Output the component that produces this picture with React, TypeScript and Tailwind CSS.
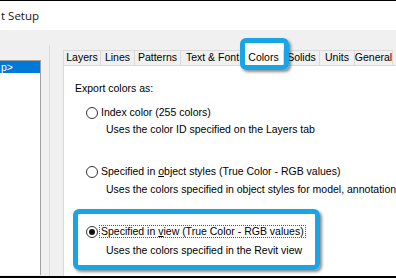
import React from 'react';

const tabs = [
  { label: 'Layers', w: 'w-[37px]' },
  { label: 'Lines', w: 'w-[34px]' },
  { label: 'Patterns', w: 'w-[46px]' },
  { label: 'Text & Font', w: 'w-[64px]' },
  { label: 'Colors', w: 'w-[39px]', active: true },
  { label: 'Solids', w: 'w-[36px]' },
  { label: 'Units', w: 'w-[35px]' },
  { label: 'General', w: 'w-[38px]' },
];

function Radio({ checked }: { checked?: boolean }) {
  return (
    <span className="w-[12px] h-[12px] rounded-full border border-[#333] bg-white flex items-center justify-center shrink-0">
      {checked && <span className="w-[6px] h-[6px] rounded-full bg-[#111]" />}
    </span>
  );
}

export default function App() {
  return (
    <div
      className="relative w-[396px] h-[278px] overflow-hidden bg-[#f0f0f0] flex flex-col text-[#000]"
      style={{ fontFamily: '"Liberation Sans", Arial, sans-serif' }}
    >
      <div className="h-[1px] bg-black shrink-0" />
      {/* title bar */}
      <div className="h-[29px] bg-white flex items-center pl-[1px] shrink-0">
        <span className="text-[11.5px] text-[#1a1020]" style={{ fontFamily: '"Open Sans", "Noto Sans", sans-serif' }}>
          t Setup
        </span>
      </div>

      {/* body */}
      <div className="flex-1 flex min-h-0">
        <div className="w-[50px] pt-[15px] flex flex-col shrink-0">
          <div className="flex-1 border-r border-[#dcdcdc] pt-[15px] pb-[1px] flex flex-col">
            <div className="w-[41px] flex-1 bg-white border-t border-r border-[#a0a0a0]">
              <div className="h-[12px] bg-[#0078d7] text-white text-[10.5px] leading-[12px] pl-[1px]">p&gt;</div>
            </div>
          </div>
        </div>

        <div className="flex-1 ml-[13px] pt-[20px] flex flex-col min-w-0 text-[10.5px]">
          <div className="h-[15px] flex shrink-0">
            {tabs.map((t) =>
              t.active ? (
                <div key={t.label} className={`${t.w} -mt-[6px] h-[22px] bg-white flex items-center justify-center shrink-0 relative z-10`}>
                  <span className="mt-[5px]">{t.label}</span>
                </div>
              ) : (
                <div
                  key={t.label}
                  className={`${t.w} h-[15px] border-l border-t border-r-0 border-[#d9d9d9] bg-[#f0f0f0] flex items-center justify-center shrink-0 whitespace-nowrap`}
                >
                  {t.label}
                </div>
              )
            )}
            <div className="border-l border-[#d9d9d9]" />
          </div>
          <div className="flex-1 bg-white border-t border-l border-[#d9d9d9] pl-[11px] pt-[16px] leading-[13px] whitespace-nowrap">
            <div>Export colors as:</div>
            <div className="mt-[11px] ml-[11px] flex items-center h-[13px] gap-[3px]">
              <Radio />
              <span>Index color (255 colors)</span>
            </div>
            <div className="mt-[4px] ml-[31px]">Uses the color ID specified on the Layers tab</div>

            <div className="mt-[29px] ml-[11px] flex items-center h-[13px] gap-[3px]">
              <Radio />
              <span>
                Specified in <u>o</u>bject styles (True Color - RGB values)
              </span>
            </div>
            <div className="mt-[5px] ml-[31px]">
              Uses the colors specified in object styles for model, annotation and analytical categories
            </div>

            <div className="mt-[29px] ml-[11px] flex items-center h-[13px] gap-[2px]">
              <Radio checked />
              <span className="outline outline-1 outline-dotted outline-[#555] px-[1px] leading-[11px]">
                Specified in <u>v</u>iew (True Color - RGB values)
              </span>
            </div>
            <div className="mt-[6px] ml-[31px]">Uses the colors specified in the Revit view</div>
          </div>
        </div>
      </div>
      <div className="h-[2px] bg-black shrink-0" />

      {/* callout highlights */}
      <div className="absolute left-[240px] top-[38px] w-[49px] h-[32px] border-[5px] border-[#19a4e6] rounded-[6px] shadow-[2px_2px_3px_rgba(0,0,0,0.45)] z-20" />
      <div className="absolute left-[73px] top-[209px] w-[247px] h-[61px] border-[5px] border-[#19a4e6] rounded-[6px] shadow-[2px_2px_3px_rgba(0,0,0,0.45)] z-20" />
    </div>
  );
}
